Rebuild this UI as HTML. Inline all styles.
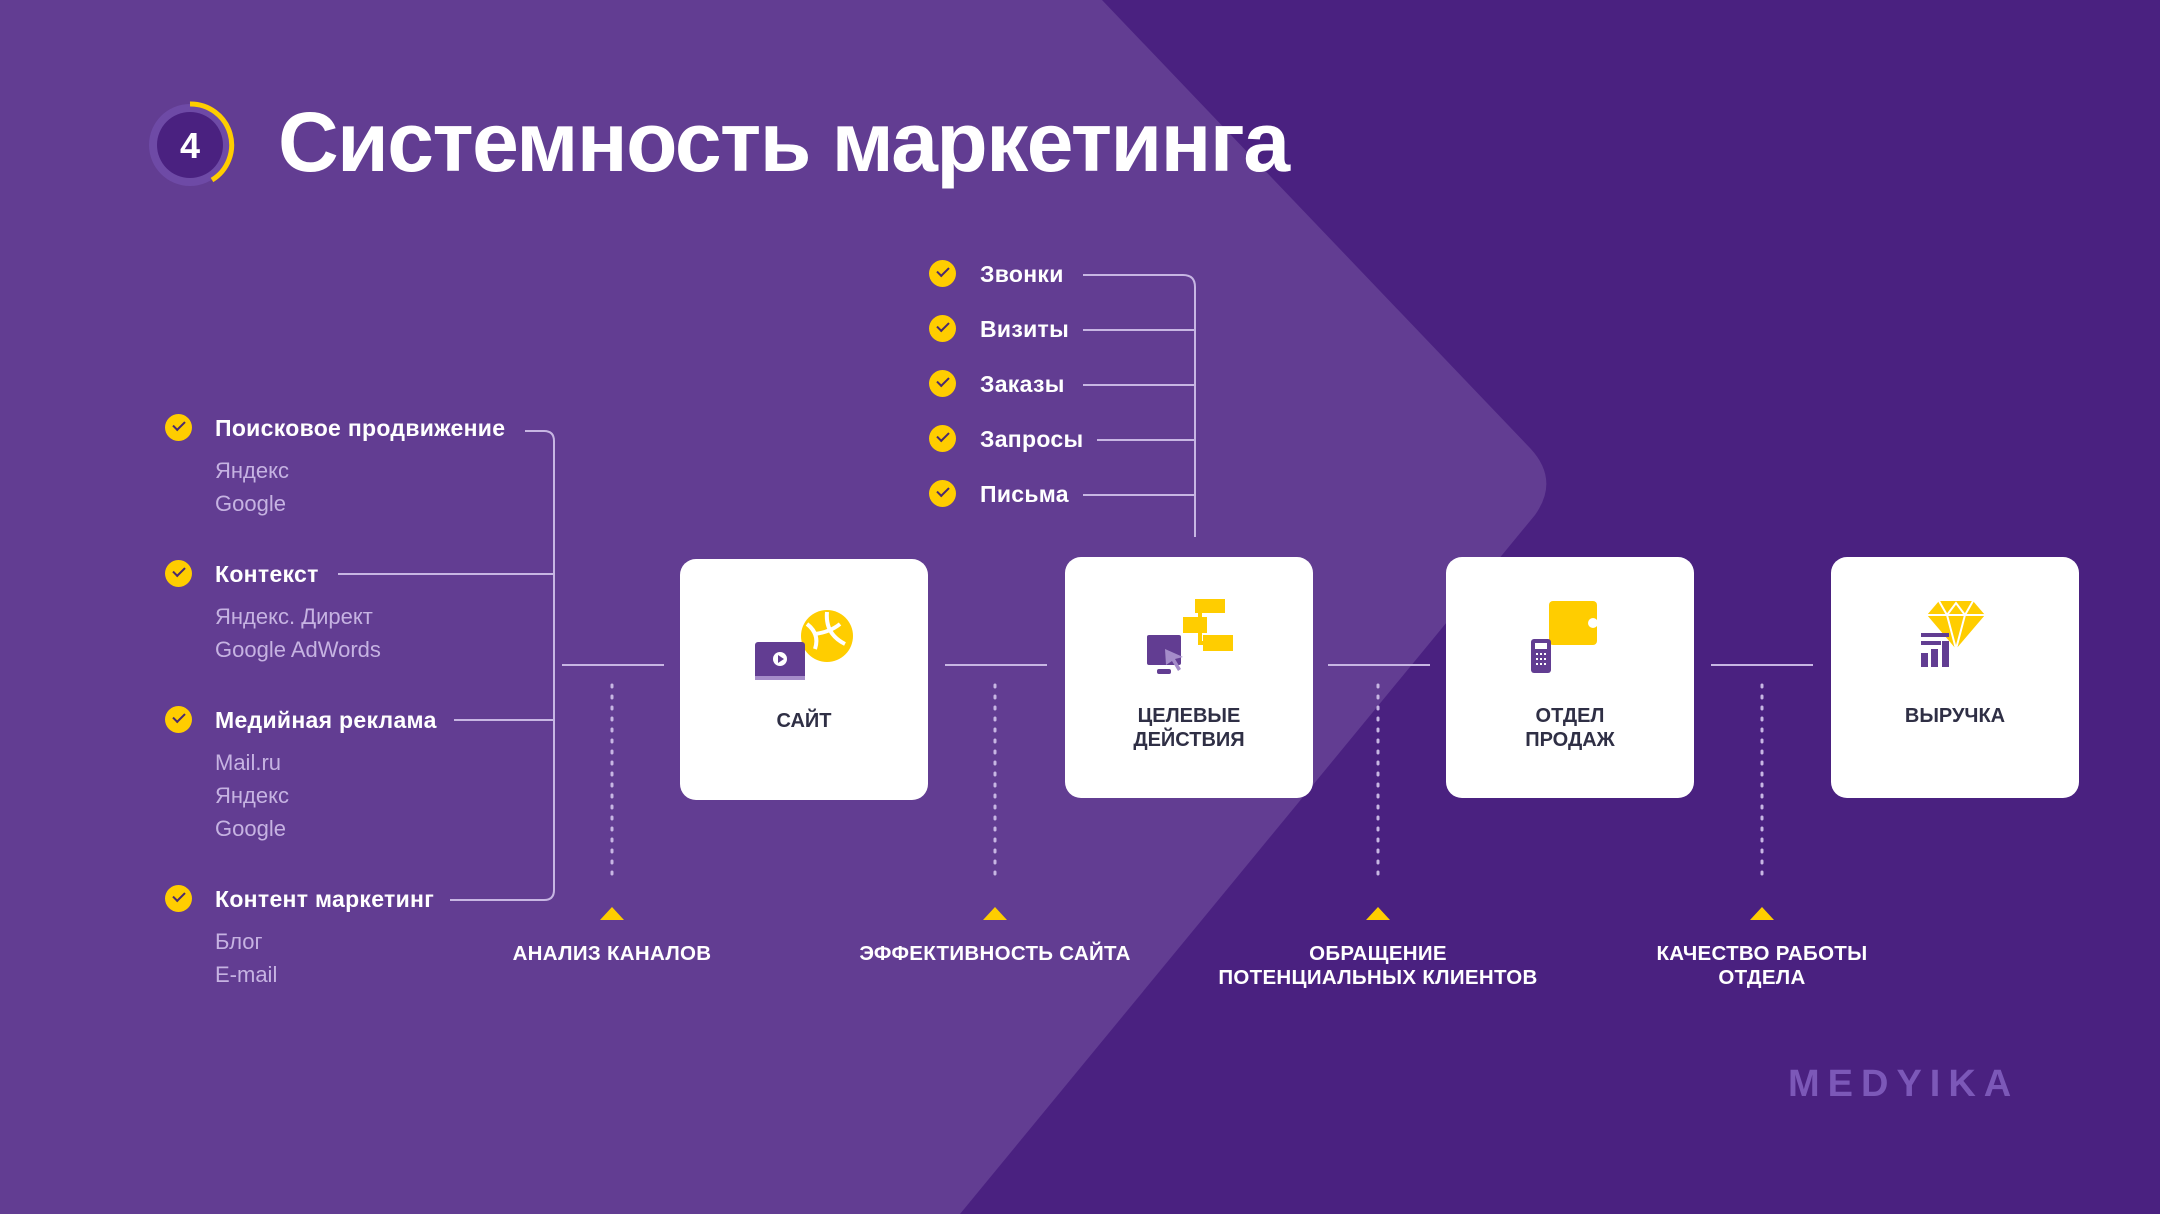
<!DOCTYPE html>
<html><head><meta charset="utf-8"><style>
*{margin:0;padding:0;box-sizing:border-box}
body{width:2160px;height:1214px;overflow:hidden;position:relative;background:#4a2180;font-family:"Liberation Sans","DejaVu Sans",sans-serif}
.a{position:absolute;white-space:nowrap}
.h{color:#fff;font-weight:bold;font-size:23px;line-height:26px;letter-spacing:0.3px}
.s{color:#c6b3e2;font-size:22px;line-height:26px}
.chk{position:absolute;width:27px;height:27px;border-radius:50%;background:#ffcd00}
.chk:after{content:"";position:absolute;left:8px;top:7px;width:10px;height:5px;border-left:2px solid #4a2a6e;border-bottom:2px solid #4a2a6e;transform:rotate(-45deg)}
.box{position:absolute;background:#fff;border-radius:16px;width:248px;height:241px}
.bl{position:absolute;left:0;right:0;text-align:center;color:#2f2f45;font-weight:bold;font-size:20px;line-height:24px}
.lab{position:absolute;text-align:center;color:#fff;font-weight:bold;font-size:20.5px;line-height:24px;width:400px;letter-spacing:0.3px}
.tri{position:absolute;width:0;height:0;border-left:12px solid transparent;border-right:12px solid transparent;border-bottom:13px solid #ffcd00}
</style></head><body>
<svg class="a" style="left:0;top:0" width="2160" height="1214">
<path d="M0 0 H1102 L1530 448 Q1560 480 1535 515 L960 1214 H0 Z" fill="#623d92"/>
<g stroke="#c7b6e3" stroke-width="2" fill="none">
<path d="M525 431 H544 Q554 431 554 441 V890 Q554 900 544 900 H450"/>
<path d="M338 574 H554 M454 720 H554"/>
<path d="M562 665 H664 M945 665 H1047 M1328 665 H1430 M1711 665 H1813"/>
<path d="M1083 275 H1183 Q1195 275 1195 287 V537 M1083 330 H1195 M1083 385 H1195 M1097 440 H1195 M1083 495 H1195"/>
</g>
<g stroke="#c7b6e3" stroke-width="3" stroke-dasharray="2 9" stroke-linecap="round">
<path d="M612 685 V878 M995 685 V878 M1378 685 V878 M1762 685 V878"/>
</g>
<circle cx="190" cy="145" r="41" fill="#6e4aa6"/>
<circle cx="190" cy="145" r="33" fill="#4a2180"/>
<path d="M190 104 A41 41 0 0 1 212 180" stroke="#ffcd00" stroke-width="5" fill="none"/>
<text x="190" y="158" text-anchor="middle" fill="#fff" font-family="Liberation Sans" font-weight="bold" font-size="36">4</text>
</svg>
<div class="a" style="left:278px;top:92px;color:#fff;font-weight:bold;font-size:84px;line-height:100px;letter-spacing:-1.5px">Системность маркетинга</div>

<div class="chk" style="left:165px;top:414px"></div><div class="a h" style="left:215px;top:415px">Поисковое продвижение</div>
<div class="a s" style="left:215px;top:458px">Яндекс</div><div class="a s" style="left:215px;top:491px">Google</div>
<div class="chk" style="left:165px;top:560px"></div><div class="a h" style="left:215px;top:561px">Контекст</div>
<div class="a s" style="left:215px;top:604px">Яндекс. Директ</div><div class="a s" style="left:215px;top:637px">Google AdWords</div>
<div class="chk" style="left:165px;top:706px"></div><div class="a h" style="left:215px;top:707px">Медийная реклама</div>
<div class="a s" style="left:215px;top:750px">Mail.ru</div><div class="a s" style="left:215px;top:783px">Яндекс</div><div class="a s" style="left:215px;top:816px">Google</div>
<div class="chk" style="left:165px;top:885px"></div><div class="a h" style="left:215px;top:886px">Контент маркетинг</div>
<div class="a s" style="left:215px;top:929px">Блог</div><div class="a s" style="left:215px;top:962px">E-mail</div>

<div class="chk" style="left:929px;top:260px"></div><div class="a h" style="left:980px;top:261px">Звонки</div>
<div class="chk" style="left:929px;top:315px"></div><div class="a h" style="left:980px;top:316px">Визиты</div>
<div class="chk" style="left:929px;top:370px"></div><div class="a h" style="left:980px;top:371px">Заказы</div>
<div class="chk" style="left:929px;top:425px"></div><div class="a h" style="left:980px;top:426px">Запросы</div>
<div class="chk" style="left:929px;top:480px"></div><div class="a h" style="left:980px;top:481px">Письма</div>

<div class="box" style="left:680px;top:559px">
<svg class="a" style="left:75px;top:45px" width="110" height="90">
<circle cx="72" cy="32" r="26" fill="#ffcd00"/>
<path d="M52 20 Q65 30 60 45 M72 8 Q70 30 90 40 M60 30 Q75 28 85 20" stroke="#fff" stroke-width="4" fill="none"/>
<rect x="0" y="38" width="50" height="37" rx="3" fill="#623d92"/>
<rect x="0" y="72" width="50" height="4" fill="#a58cc9"/>
<circle cx="25" cy="55" r="7" fill="#fff"/><path d="M23 51 L29 55 L23 59Z" fill="#623d92"/>
</svg>
<div class="bl" style="top:150px">САЙТ</div></div>

<div class="box" style="left:1065px;top:557px">
<svg class="a" style="left:80px;top:40px" width="100" height="90">
<rect x="50" y="2" width="30" height="14" fill="#ffcd00"/><rect x="38" y="20" width="24" height="16" fill="#ffcd00"/><rect x="58" y="38" width="30" height="16" fill="#ffcd00"/>
<path d="M55 16 V46 H60" stroke="#ffcd00" stroke-width="4" fill="none"/>
<rect x="2" y="38" width="34" height="30" rx="2" fill="#623d92"/><rect x="12" y="72" width="14" height="5" rx="2" fill="#623d92"/>
<path d="M20 52 L38 60 L30 62 L36 72 L33 74 L27 64 L21 68Z" fill="#a58cc9"/>
</svg>
<div class="bl" style="top:147px">ЦЕЛЕВЫЕ<br>ДЕЙСТВИЯ</div></div>

<div class="box" style="left:1446px;top:557px">
<svg class="a" style="left:85px;top:40px" width="90" height="95">
<rect x="18" y="4" width="48" height="44" rx="4" fill="#ffcd00"/><circle cx="62" cy="26" r="5" fill="#fff"/>
<rect x="0" y="42" width="20" height="34" rx="3" fill="#623d92"/><rect x="4" y="46" width="12" height="6" fill="#fff"/>
<path d="M5 57h2M9 57h2M13 57h2M5 62h2M9 62h2M13 62h2M5 67h2M9 67h2M13 67h2" stroke="#fff" stroke-width="2"/>
</svg>
<div class="bl" style="top:147px">ОТДЕЛ<br>ПРОДАЖ</div></div>

<div class="box" style="left:1831px;top:557px">
<svg class="a" style="left:90px;top:40px" width="90" height="90">
<path d="M18 4 H52 L64 18 L35 52 L6 18Z" fill="#ffcd00"/>
<path d="M6 18 H64 M18 4 L26 18 L35 52 L44 18 L52 4 M26 18 L35 6 L44 18" stroke="#fff" stroke-width="2" fill="none"/>
<rect x="0" y="36" width="28" height="4" fill="#623d92"/><rect x="0" y="44" width="20" height="4" fill="#623d92"/>
<rect x="0" y="56" width="7" height="14" fill="#623d92"/><rect x="10" y="52" width="7" height="18" fill="#623d92"/><rect x="21" y="44" width="7" height="26" fill="#623d92"/>
</svg>
<div class="bl" style="top:147px">ВЫРУЧКА</div></div>

<div class="tri" style="left:600px;top:907px"></div>
<div class="tri" style="left:983px;top:907px"></div>
<div class="tri" style="left:1366px;top:907px"></div>
<div class="tri" style="left:1750px;top:907px"></div>
<div class="lab" style="left:412px;top:942px">АНАЛИЗ КАНАЛОВ</div>
<div class="lab" style="left:795px;top:942px">ЭФФЕКТИВНОСТЬ САЙТА</div>
<div class="lab" style="left:1178px;top:942px">ОБРАЩЕНИЕ<br>ПОТЕНЦИАЛЬНЫХ КЛИЕНТОВ</div>
<div class="lab" style="left:1562px;top:942px">КАЧЕСТВО РАБОТЫ<br>ОТДЕЛА</div>

<div class="a" style="left:1788px;top:1064px;color:#7c58b8;font-size:38px;font-weight:bold;letter-spacing:8px;line-height:40px">MEDYIKA</div>
</body></html>
